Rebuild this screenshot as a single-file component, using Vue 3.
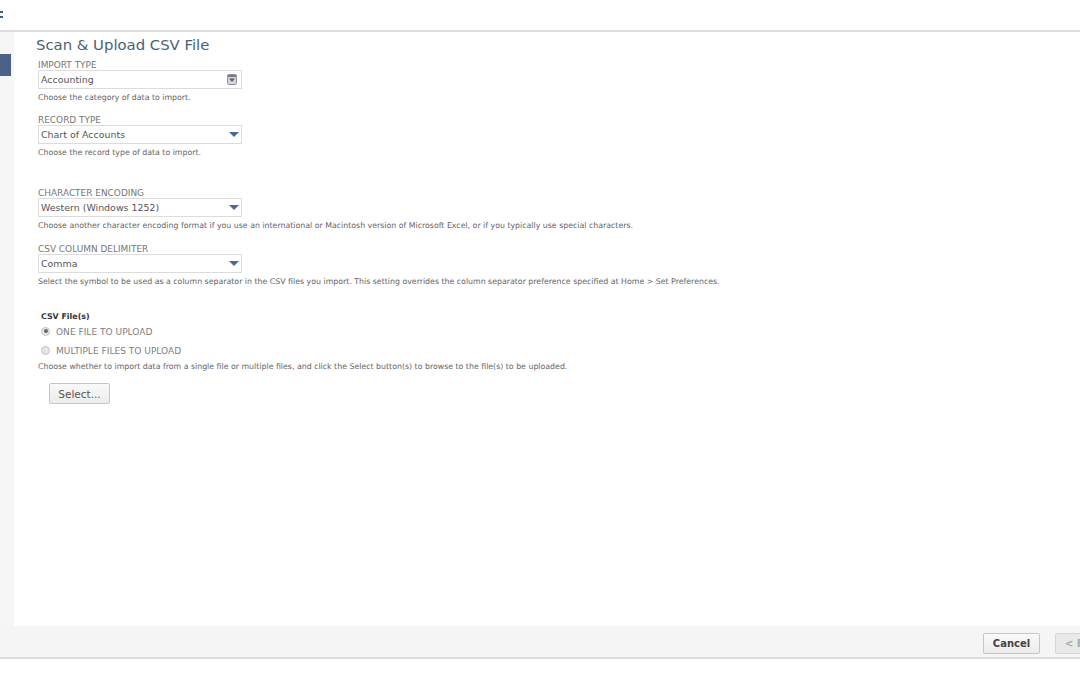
<script setup>
const topFields = [
  { label: "IMPORT TYPE", value: "Accounting", hint: "Choose the category of data to import.", locked: true },
  { label: "RECORD TYPE", value: "Chart of Accounts", hint: "Choose the record type of data to import." },
];
const formatFields = [
  {
    label: "CHARACTER ENCODING",
    value: "Western (Windows 1252)",
    hint: "Choose another character encoding format if you use an international or Macintosh version of Microsoft Excel, or if you typically use special characters.",
  },
  {
    label: "CSV COLUMN DELIMITER",
    value: "Comma",
    hint: "Select the symbol to be used as a column separator in the CSV files you import. This setting overrides the column separator preference specified at Home > Set Preferences.",
  },
];
</script>

<template>
  <div class="page">
    <header class="topbar">
      <span class="logo-bit"><i></i><i></i></span>
    </header>

    <div class="middle">
      <aside class="side">
        <div class="side-tab"></div>
      </aside>

      <main class="content">
        <h1 class="title">Scan &amp; Upload CSV File</h1>

        <div class="group first">
          <div v-for="f in topFields" :key="f.label" class="field">
            <label class="label">{{ f.label }}</label>
            <div class="select">
              <span>{{ f.value }}</span>
              <svg v-if="f.locked" class="lock-icon" width="10" height="11" viewBox="0 0 10 11">
                <rect x="0.5" y="0.5" width="9" height="10" rx="1" fill="#d4d6d9" stroke="#8f9398" />
                <rect x="1" y="1" width="8" height="2" fill="#777b80" />
                <path d="M2 4.5h6L5 8z" fill="#56606e" />
              </svg>
              <span v-else class="arrow"></span>
            </div>
            <p class="hint">{{ f.hint }}</p>
          </div>
        </div>

        <div class="group second">
          <div v-for="f in formatFields" :key="f.label" class="field">
            <label class="label">{{ f.label }}</label>
            <div class="select">
              <span>{{ f.value }}</span>
              <span class="arrow"></span>
            </div>
            <p class="hint">{{ f.hint }}</p>
          </div>
        </div>

        <section class="files">
          <div class="files-title">CSV File(s)</div>
          <div class="radio-row one">
            <span class="radio on"></span>
            <span>ONE FILE TO UPLOAD</span>
          </div>
          <div class="radio-row two">
            <span class="radio"></span>
            <span>MULTIPLE FILES TO UPLOAD</span>
          </div>
          <p class="hint files-hint">Choose whether to import data from a single file or multiple files, and click the Select button(s) to browse to the file(s) to be uploaded.</p>
          <button class="btn select-btn">Select...</button>
        </section>
      </main>
    </div>

    <footer class="footer">
      <button class="btn cancel">Cancel</button>
      <button class="btn back">&lt; Back</button>
    </footer>
    <div class="tail"></div>
  </div>
</template>

<style>
html,
body {
  margin: 0;
  background: #fff;
  overflow: hidden;
}
</style>

<style scoped>
.page {
  width: 1080px;
  height: 675px;
  display: flex;
  flex-direction: column;
  overflow: hidden;
  font-family: "DejaVu Sans", Verdana, sans-serif;
  color: #555;
  background: #fff;
}
.topbar {
  height: 30px;
  flex: none;
  border-bottom: 2px solid #dedede;
  display: flex;
  align-items: center;
}
.logo-bit {
  display: flex;
  flex-direction: column;
  gap: 3px;
  margin-top: -1px;
}
.logo-bit i {
  display: block;
  width: 3px;
  height: 2px;
  background: #3f5f86;
}
.middle {
  flex: 1;
  display: flex;
  min-height: 0;
}
.side {
  width: 14px;
  flex: none;
  background: #f6f6f6;
  padding-top: 22px;
  box-sizing: border-box;
}
.side-tab {
  width: 11px;
  height: 22px;
  background: #4a6285;
}
.content {
  flex: 1;
  padding: 4px 0 0 22px;
  min-width: 0;
}
.title {
  margin: 0;
  font-size: 14.85px;
  line-height: 18px;
  font-weight: 400;
  color: #4a6178;
}
.group {
  padding-left: 2px;
  display: flex;
  flex-direction: column;
}
.group.first {
  margin-top: 5px;
  gap: 11px;
}
.group.second {
  margin-top: 29px;
  gap: 12px;
}
.label {
  display: block;
  height: 11px;
  font-size: 8.95px;
  line-height: 13px;
  color: #777;
}
.select {
  width: 204px;
  height: 19px;
  border: 1px solid #dcdcdc;
  box-sizing: border-box;
  display: flex;
  align-items: center;
  justify-content: space-between;
  padding: 0 2px;
  font-size: 9.45px;
  color: #555;
  background: #fff;
}
.arrow {
  width: 0;
  height: 0;
  border-left: 5px solid transparent;
  border-right: 5px solid transparent;
  border-top: 5px solid #4c6a96;
}
.lock-icon {
  display: block;
  margin-right: 2px;
}
.hint {
  margin: 3px 0 0;
  font-size: 7.83px;
  line-height: 11px;
  color: #666;
  white-space: nowrap;
}
.files {
  margin-top: 24px;
  padding-left: 2px;
}
.files-title {
  padding-left: 3px;
  font-size: 7.9px;
  line-height: 11px;
  font-weight: 700;
  color: #333;
}
.radio-row {
  display: flex;
  align-items: center;
  gap: 6px;
  padding-left: 3px;
  font-size: 9.05px;
  line-height: 11px;
  color: #808080;
}
.radio-row.one {
  margin-top: 3px;
  height: 14px;
}
.radio-row.two {
  margin-top: 5px;
  height: 14px;
}
.files-hint {
  margin-top: 3px;
}
.radio {
  width: 9px;
  height: 9px;
  flex: none;
  border-radius: 50%;
  border: 1px solid #c4c4c4;
  background: #e6e6e6;
  box-sizing: border-box;
  position: relative;
  top: -1px;
}
.radio.on::after {
  content: "";
  position: absolute;
  left: 1.5px;
  top: 1.5px;
  width: 4px;
  height: 4px;
  border-radius: 50%;
  background: #666;
}
.btn {
  display: block;
  height: 21px;
  padding: 0;
  border: 1px solid #c6c6c6;
  border-radius: 2px;
  background: linear-gradient(#f9f9f9, #ececec);
  font-family: inherit;
  color: #555;
}
.select-btn {
  width: 61px;
  margin: 11px 0 0 11px;
  font-size: 10.5px;
}
.footer {
  height: 31px;
  flex: none;
  background: #f5f5f5;
  display: flex;
  justify-content: flex-end;
  align-items: center;
  gap: 15px;
  padding-top: 3px;
  box-sizing: border-box;
  overflow: hidden;
}
.cancel {
  width: 57px;
  flex: none;
  font-size: 10px;
  font-weight: 700;
  color: #444;
}
.back {
  width: 57px;
  flex: none;
  margin-right: -32px;
  font-size: 10px;
  font-weight: 700;
  text-align: left;
  padding-left: 9px;
  color: #aaa;
  background: #e9e9e9;
  border-color: #d6d6d6;
}
.tail {
  flex: none;
  height: 18px;
  border-top: 2px solid #dedede;
  box-sizing: border-box;
}
</style>
